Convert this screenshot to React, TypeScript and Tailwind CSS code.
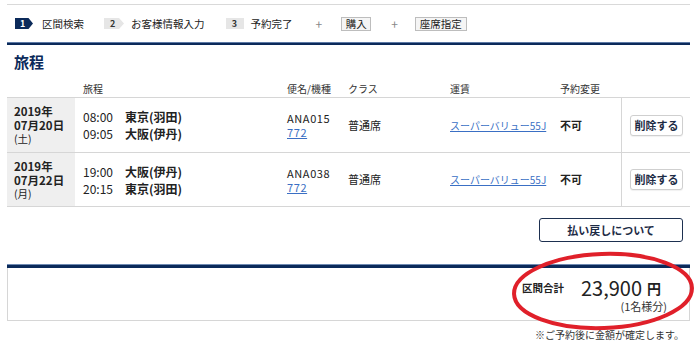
import React from 'react'

const NAVY = 'bg-[#0b2a5a]'

const ROWS = [
  {
    year: '2019年',
    date: '07月20日',
    dow: '(土)',
    legs: [
      { time: '08:00', place: '東京(羽田)' },
      { time: '09:05', place: '大阪(伊丹)' },
    ],
    flight: 'ANA015',
  },
  {
    year: '2019年',
    date: '07月22日',
    dow: '(月)',
    legs: [
      { time: '19:00', place: '大阪(伊丹)' },
      { time: '20:15', place: '東京(羽田)' },
    ],
    flight: 'ANA038',
  },
]

const COLS = 'grid grid-cols-[68px_212px_61px_102px_110px_61px_69px]'

function Steps() {
  return (
    <div className="flex h-[37px] items-center pl-[8px] text-[10.5px] text-[#222]">
      <span className="flex h-[11px] w-[18px] items-center bg-[#0b2a5a] pl-[5px] text-[9px] font-bold leading-none text-white [clip-path:polygon(0_0,75%_0,100%_50%,75%_100%,0_100%)]">
        1
      </span>
      <span className="ml-[9px]">区間検索</span>
      <span className="ml-[20px] flex h-[11px] w-[20px] items-center bg-[#e6e6e6] pl-[6px] text-[9px] font-bold leading-none text-[#333] [clip-path:polygon(0_0,75%_0,100%_50%,75%_100%,0_100%)]">
        2
      </span>
      <span className="ml-[7px]">お客様情報入力</span>
      <span className="ml-[21px] flex h-[11px] w-[18px] items-center justify-center bg-[#e6e6e6] text-[9px] font-bold leading-none text-[#333]">
        3
      </span>
      <span className="ml-[7px]">予約完了</span>
      <span className="ml-[23px] text-[12px] text-[#888]">+</span>
      <span className="ml-[19px] flex h-[14px] w-[30px] items-center justify-center border border-[#bdbdbd] bg-[#f5f5f5]">
        購入
      </span>
      <span className="ml-[20px] text-[12px] text-[#888]">+</span>
      <span className="ml-[17px] flex h-[14px] w-[52px] items-center justify-center border border-[#bdbdbd] bg-[#f5f5f5]">
        座席指定
      </span>
    </div>
  )
}

export default function App() {
  return (
    <div className="relative h-[347px] w-[700px] overflow-hidden bg-white font-['Noto_Sans_CJK_JP','Noto_Sans',sans-serif] text-[#222]">
      <div className="ml-[7px] w-[683px]">
        <div className="h-[4px]" />
        <div className="h-px bg-[#d9d9d9]" />
        <Steps />
        <div className={`h-[3px] border-t border-[#5d7aa6] ${NAVY}`} />

        <div className="flex h-[34px] items-center pl-[7px] text-[15px] font-bold text-[#0b2a5a]">旅程</div>

        <div className={`${COLS} h-[18px] items-center text-[10px] text-[#333]`}>
          <span />
          <span className="pl-[8px]">旅程</span>
          <span>便名/機種</span>
          <span>クラス</span>
          <span>運賃</span>
          <span>予約変更</span>
          <span />
        </div>

        {ROWS.map((r, i) => (
          <div
            key={i}
            className={`${COLS} h-[55px] border-t border-[#d6d6d6] ${i === ROWS.length - 1 ? 'border-b' : ''}`}
          >
            <div className="flex flex-col justify-center bg-[#efefef] pl-[7px] text-[11.5px] leading-[14px]">
              <span className="font-bold">{r.year}</span>
              <span className="font-bold">{r.date}</span>
              <span className="text-[10.5px]">{r.dow}</span>
            </div>
            <div className="flex flex-col justify-center pl-[8px] text-[12px] leading-[17px]">
              {r.legs.map((l) => (
                <div key={l.time} className="flex">
                  <span className="w-[42px]">{l.time}</span>
                  <span className="font-bold">{l.place}</span>
                </div>
              ))}
            </div>
            <div className="flex flex-col justify-center text-[11px] leading-[14px] tracking-[0.6px]">
              <span>{r.flight}</span>
              <span className="text-[#3a6fc4] underline">772</span>
            </div>
            <div className="flex items-center text-[11px]">普通席</div>
            <div className="flex items-center text-[10px]">
              <span className="text-[#3a6fc4] underline">スーパーバリュー55J</span>
            </div>
            <div className="flex items-center text-[11px] font-bold">不可</div>
            <div className="flex items-center border-l border-[#d6d6d6] pl-[8px]">
              <button className="h-[21px] w-[53px] rounded-[3px] border border-[#cfcfcf] bg-white text-[11px] font-bold text-[#1d2b45] shadow-[0_1px_1px_rgba(0,0,0,0.06)]">
                削除する
              </button>
            </div>
          </div>
        ))}

        <div className="mt-[11px] flex justify-end pr-[7px]">
          <button className="h-[24px] w-[144px] rounded-[3px] border border-[#1d3050] bg-white text-[11px] font-bold text-[#1d2b45]">
            払い戻しについて
          </button>
        </div>

        <div className={`mt-[22px] h-[4px] border-t border-[#6f8ab2] ${NAVY}`} />
        <div className="flex h-[53px] flex-col items-end border-x border-b border-[#d6d6d6] pr-[22px] pt-[7px]">
          <div className="mr-[6px] flex h-[25px] items-center">
            <span className="mr-[17px] text-[10.5px] font-bold">区間合計</span>
            <span className="text-[20px] leading-none">23,900</span>
            <span className="ml-[5px] text-[14px] font-bold leading-none">円</span>
          </div>
          <span className="text-[11px] leading-[12px] text-[#333]">(1名様分)</span>
        </div>
        <div className="mt-[7px] pr-[6px] text-right text-[10px] leading-[14px] text-[#333]">
          ※ご予約後に金額が確定します。
        </div>
      </div>

      <svg className="pointer-events-none absolute left-[509px] top-[250px]" width="188" height="82" viewBox="0 0 188 82">
        <ellipse cx="94" cy="41" rx="89" ry="37" fill="none" stroke="#e0202a" strokeWidth="4" transform="rotate(-2 94 41)" />
      </svg>
    </div>
  )
}
